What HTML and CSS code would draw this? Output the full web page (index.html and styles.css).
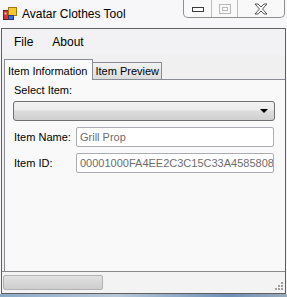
FILE: index.html
```html
<!DOCTYPE html>
<html>
<head>
<meta charset="utf-8">
<link rel="stylesheet" href="styles.css">
</head>
<body>
<div class="window">
  <div class="titlebar">
    <svg class="app-icon" width="14" height="13" viewBox="0 0 14 13">
      <rect x="0.5" y="3.5" width="6" height="9" fill="#d8332a" stroke="#7a1a14"/>
      <rect x="1.5" y="5.5" width="2" height="2" fill="#f7c9a0"/>
      <rect x="5.5" y="0.5" width="8" height="8" fill="#f6c830" stroke="#a07810"/>
      <rect x="5.5" y="8.5" width="5" height="4" fill="#3d6fd0" stroke="#1d3f80"/>
    </svg>
    <span class="title">Avatar Clothes Tool</span>
    <div class="controls">
      <div class="ctl min"><svg width="12" height="6" viewBox="0 0 12 6"><rect x="0.5" y="0.5" width="11" height="4" fill="#fff" stroke="#3a3a3a"/></svg></div>
      <div class="ctl max"><svg width="12" height="10" viewBox="0 0 12 10"><rect x="0.5" y="0.5" width="11" height="9" fill="none" stroke="#b8b8b8"/><rect x="3.5" y="3.5" width="5" height="3" fill="none" stroke="#b8b8b8"/></svg></div>
      <div class="ctl close"><svg width="14" height="12" viewBox="0 0 14 12"><path d="M1 1h3l3 3 3-3h3l-4.5 5 4.5 5h-3l-3-3-3 3h-3l4.5-5z" fill="#fff" stroke="#555" stroke-width="1" stroke-linejoin="round"/></svg></div>
    </div>
  </div>
  <div class="frame">
    <div class="menubar">
      <span class="menu-item">File</span>
      <span class="menu-item">About</span>
    </div>
    <div class="tabs">
      <div class="tab-headers">
        <div class="tab active">Item Information</div>
        <div class="tab">Item Preview</div>
      </div>
      <div class="tab-page">
        <div class="label first">Select Item:</div>
        <div class="combo"><span class="arrow"></span></div>
        <div class="fields">
          <span class="label">Item Name:</span>
          <div class="textbox">Grill Prop</div>
          <span class="label">Item ID:</span>
          <div class="textbox">00001000FA4EE2C3C15C33A45858083</div>
        </div>
      </div>
    </div>
    <div class="statusbar">
      <div class="progress"></div>
      <svg class="grip" width="10" height="10" viewBox="0 0 10 10">
        <g fill="#a0a0a0">
          <rect x="7" y="0" width="2" height="2"/>
          <rect x="4" y="3" width="2" height="2"/><rect x="7" y="3" width="2" height="2"/>
          <rect x="1" y="6" width="2" height="2"/><rect x="4" y="6" width="2" height="2"/><rect x="7" y="6" width="2" height="2"/>
        </g>
      </svg>
    </div>
  </div>
  <div class="desktop"></div>
</div>
</body>
</html>
```
FILE: styles.css
```css
* { box-sizing: border-box; }
html, body { margin: 0; padding: 0; }
body {
  width: 287px;
  height: 297px;
  background: #f7f6f8;
  font-family: "Liberation Sans", Arial, sans-serif;
  font-size: 11px;
  color: #000;
  overflow: hidden;
}
.window { width: 287px; height: 297px; display: flex; flex-direction: column; }
.titlebar {
  height: 28px;
  display: flex;
  align-items: flex-start;
  background: #f7f6f8;
}
.app-icon { margin: 7px 0 0 3px; }
.title { margin: 6px 0 0 5px; line-height: 16px; font-size: 12px; }
.controls {
  margin-left: auto;
  margin-right: 2px;
  display: flex;
  height: 18px;
  border: 1px solid #8e8e8e;
  border-top: none;
  border-radius: 0 0 5px 5px;
  background: #f9f9fa;
  overflow: hidden;
}
.ctl { display: flex; align-items: center; justify-content: center; height: 17px; }
.ctl.min { width: 28px; border-right: 1px solid #bdbdbd; padding-top: 3px; }
.ctl.max { width: 26px; border-right: 1px solid #bdbdbd; }
.ctl.close { width: 46px; }
.frame {
  margin-left: 1px;
  width: 285px;
  height: 266px;
  border: 1px solid #5f5f5f;
  background: #f0f0f0;
  display: flex;
  flex-direction: column;
}
.menubar {
  height: 26px;
  display: flex;
  align-items: center;
  padding-left: 12px;
  gap: 19px;
  background: #f2f2f4;
  font-size: 12px;
}
.menu-item { line-height: 16px; }
.tabs { flex: 1; display: flex; flex-direction: column; padding-left: 2px; }
.tab-headers { height: 24px; display: flex; align-items: flex-end; }
.tab {
  height: 17px;
  padding: 0 2px 0 2px;
  border: 1px solid #898c95;
  border-bottom: none;
  background: linear-gradient(#f2f2f2, #dcdcdc);
  line-height: 16px;
  white-space: nowrap;
}
.tab.active {
  height: 21px;
  padding: 3px 5px 0 3px;
  background: #fbfbfb;
  position: relative;
  top: 1px;
  z-index: 1;
}
.tab.active + .tab { border-left: none; }
.tab-page {
  flex: 1;
  background: #f9f9f9;
  border: 1px solid #898c95;
  border-bottom: none;
  border-right: none;
  padding: 3px 10px 0 8px;
}
.label { line-height: 14px; padding-left: 1px; white-space: nowrap; }
.label.first { margin-bottom: 4px; }
.combo {
  height: 20px;
  border: 1px solid #707070;
  border-radius: 3px;
  background: linear-gradient(#f3f3f3 0%, #ebebeb 45%, #dddddd 50%, #cfcfcf 100%);
  display: flex;
  align-items: center;
  justify-content: flex-end;
  padding-right: 6px;
}
.arrow {
  width: 0; height: 0;
  border-left: 4px solid transparent;
  border-right: 4px solid transparent;
  border-top: 4px solid #000;
}
.fields {
  margin-top: 6px;
  display: grid;
  grid-template-columns: 63px 198px;
  row-gap: 6px;
  align-items: center;
}
.textbox {
  height: 20px;
  border: 1px solid #abadb3;
  border-radius: 2px;
  background: #fff;
  color: #6d6d6d;
  padding-left: 3px;
  line-height: 18px;
  white-space: nowrap;
  overflow: hidden;
}
.statusbar {
  height: 22px;
  border-top: 1px solid #8a8a8a;
  background: #f3f3f3;
  display: flex;
  align-items: center;
  justify-content: space-between;
  padding: 0 1px;
}
.progress {
  width: 100px;
  height: 15px;
  border: 1px solid #b2b2b2;
  border-radius: 2px;
  background: linear-gradient(#e2e2e2, #cdcdcd);
}
.grip { align-self: flex-end; margin-bottom: 1px; }
.desktop { flex: 1; background: linear-gradient(90deg, #8aa8c8, #b7c8d8 40%, #6f8fb8 80%, #9ab); }
```
